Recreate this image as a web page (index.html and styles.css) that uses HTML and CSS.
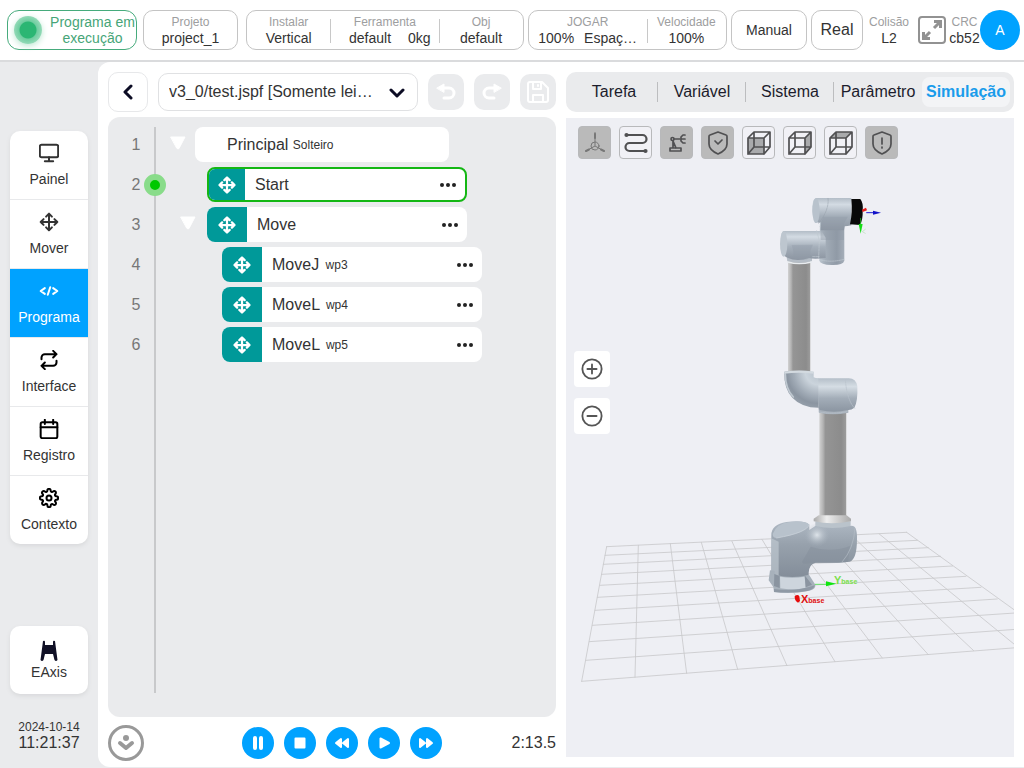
FILE: index.html
```html
<!DOCTYPE html>
<html lang="pt">
<head>
    <meta charset="UTF-8">
    <title>Programa</title>
    <link rel="stylesheet" href="styles.css">
</head>
<body>
    <svg class="defs" aria-hidden="true">
        <symbol id="move" viewBox="0 0 24 24"><path d="M12 2v20M2 12h20M8.500 5.500L12 2l3.500 3.500M8.500 18.500L12 22l3.500-3.500M5.500 8.500L2 12l3.500 3.500M18.500 8.500L22 12l-3.500 3.500" /></symbol>
        <symbol id="dots" viewBox="0 0 18 6"><circle cx="3" cy="3" r="2" /><circle cx="9" cy="3" r="2" /><circle cx="15" cy="3" r="2" /></symbol>
        <symbol id="caret" viewBox="0 0 16 14"><path d="M1 1h14L9 12.500q-1 1-2 0z" /></symbol>
        <symbol id="cube" viewBox="0 0 24 24"><path d="M1 7h16v16H1zM1 7l6-6h16l-6 6M23 1v15l-6 7M7 1v15h16M7 16l-6 7" /></symbol>
    </svg>

    <header class="topbar">
        <div class="box status"><span class="status-dot"></span><span>Programa em execução</span></div>
        <div class="box project"><div class="cell"><small>Projeto</small><span>project_1</span></div></div>
        <div class="box setup">
            <div class="cell"><small>Instalar</small><span>Vertical</span></div>
            <div class="cell tool"><small>Ferramenta</small><span class="pair"><span>default</span><span>0kg</span></span></div>
            <div class="cell"><small>Obj</small><span>default</span></div>
        </div>
        <div class="box play">
            <div class="cell jog"><small>JOGAR</small><span class="pair"><span>100%</span><span>Espaç…</span></span></div>
            <div class="cell"><small>Velocidade</small><span>100%</span></div>
        </div>
        <button class="box manual">Manual</button>
        <button class="box real">Real</button>
        <div class="tail">
            <div class="cell collision"><small>Colisão</small><span>L2</span></div>
            <button class="expand" aria-label="Expandir">
                <svg viewBox="0 0 28 28" width="28" height="28"><rect x="1" y="1" width="26" height="26" rx="3" /><path d="M16 12l6-6M16 5.500h6.500V12M12 16l-6 6M5.500 16v6.500H12" /></svg>
            </button>
            <div class="cell crc"><small>CRC</small><span>cb52</span></div>
            <button class="avatar">A</button>
        </div>
    </header>

    <main class="layout">
        <aside class="sidebar">
            <nav class="card">
                <a href="#" class="item"><svg viewBox="0 0 24 24"><rect x="1" y="2" width="22" height="15" rx="2" /><path d="M7 22h10M12 17v5" /></svg>Painel</a>
                <a href="#" class="item"><svg><use href="#move" /></svg>Mover</a>
                <a href="#" class="item active"><svg viewBox="0 0 24 24"><path d="M7 8.500L2 12l5 3.500M17 8.500l5 3.500-5 3.500M13.500 7.500l-3 9" /></svg>Programa</a>
                <a href="#" class="item"><svg class="dark" viewBox="0 0 24 24"><path d="M17 1l4 4-4 4M3 11V9a4 4 0 0 1 4-4h14M7 23l-4-4 4-4M21 13v2a4 4 0 0 1-4 4H3" /></svg>Interface</a>
                <a href="#" class="item"><svg class="dark" viewBox="0 0 24 24"><rect x="2" y="4" width="20" height="19" rx="2" /><path d="M17 1v5M7 1v5M2 10h20" /></svg>Registro</a>
                <a href="#" class="item"><svg class="dark" viewBox="0 0 24 24"><circle cx="12" cy="12" r="3" /><path d="M19.400 15a1.650 1.650 0 0 0 .33 1.820l.06.06a2 2 0 1 1-2.830 2.830l-.06-.06a1.650 1.650 0 0 0-2.820 1.170V21a2 2 0 0 1-4 0v-.09a1.650 1.650 0 0 0-2.900-1.260l-.06.06a2 2 0 1 1-2.830-2.830l.06-.06A1.650 1.650 0 0 0 3.090 14H3a2 2 0 0 1 0-4h.09a1.650 1.650 0 0 0 1.260-2.820l-.06-.06a2 2 0 1 1 2.830-2.830l.06.06A1.650 1.650 0 0 0 10 3.090V3a2 2 0 0 1 4 0v.09a1.650 1.650 0 0 0 2.820 1.260l.06-.06a2 2 0 1 1 2.830 2.830l-.06.06A1.650 1.650 0 0 0 20.910 10H21a2 2 0 0 1 0 4h-.09a1.650 1.650 0 0 0-1.510 1z" /></svg>Contexto</a>
            </nav>
            <a href="#" class="card eaxis">
                <svg viewBox="0 0 18 22" width="18" height="22"><path d="M3 1q2-1 2 1v3h8V2q0-2 2-1l2.500 19q-1.500 2-3 0L13 14H5L3.500 20q-1.500 2-3 0z" /></svg>
                EAxis
            </a>
            <div class="clock"><span class="date">2024-10-14</span><span>11:21:37</span></div>
        </aside>

        <div class="workspace">
            <section class="program">
                <div class="filebar">
                    <button class="back" aria-label="Voltar"><svg viewBox="0 0 12 16" width="12" height="16"><path d="M9 2L3 8l6 6" /></svg></button>
                    <div class="file">
                        <select aria-label="Arquivo"><option>v3_0/test.jspf [Somente lei…</option></select>
                        <svg viewBox="0 0 16 12" width="16" height="12"><path d="M2 3l6 6 6-6" /></svg>
                    </div>
                    <button class="tool-btn" aria-label="Desfazer"><svg viewBox="0 0 22 22"><path class="solid" d="M2 7l7-4v8z" /><path d="M8 7h6a4.500 4.500 0 0 1 0 10H9" /></svg></button>
                    <button class="tool-btn" aria-label="Refazer"><svg viewBox="0 0 22 22"><path class="solid" d="M20 7l-7-4v8z" /><path d="M14 7H8a4.500 4.500 0 0 0 0 10h5" /></svg></button>
                    <button class="tool-btn save" aria-label="Salvar"><svg viewBox="0 0 22 22"><path d="M3 1h12l6 6v12a2 2 0 0 1-2 2H3a2 2 0 0 1-2-2V3a2 2 0 0 1 2-2zM6 1v7h8V1M6 21v-7h10v7M11 4v1" /></svg></button>
                </div>

                <div class="tree">
                    <div class="row level0">
                        <span class="num">1</span>
                        <span class="indent"><svg class="caret"><use href="#caret" /></svg></span>
                        <div class="node root">Principal <small>Solteiro</small></div>
                    </div>
                    <div class="row level1 current">
                        <span class="num">2</span><span class="marker"></span>
                        <span class="indent"></span>
                        <div class="node"><span class="node-icon"><svg><use href="#move" /></svg></span>Start<button class="more" aria-label="Mais"><svg><use href="#dots" /></svg></button></div>
                    </div>
                    <div class="row level1">
                        <span class="num">3</span>
                        <span class="indent"><svg class="caret"><use href="#caret" /></svg></span>
                        <div class="node"><span class="node-icon"><svg><use href="#move" /></svg></span>Move<button class="more" aria-label="Mais"><svg><use href="#dots" /></svg></button></div>
                    </div>
                    <div class="row level2">
                        <span class="num">4</span>
                        <span class="indent"></span>
                        <div class="node"><span class="node-icon"><svg><use href="#move" /></svg></span>MoveJ <small>wp3</small><button class="more" aria-label="Mais"><svg><use href="#dots" /></svg></button></div>
                    </div>
                    <div class="row level2">
                        <span class="num">5</span>
                        <span class="indent"></span>
                        <div class="node"><span class="node-icon"><svg><use href="#move" /></svg></span>MoveL <small>wp4</small><button class="more" aria-label="Mais"><svg><use href="#dots" /></svg></button></div>
                    </div>
                    <div class="row level2">
                        <span class="num">6</span>
                        <span class="indent"></span>
                        <div class="node"><span class="node-icon"><svg><use href="#move" /></svg></span>MoveL <small>wp5</small><button class="more" aria-label="Mais"><svg><use href="#dots" /></svg></button></div>
                    </div>
                </div>

                <div class="controls">
                    <button class="locate" aria-label="Localizar"><svg viewBox="0 0 36 36" width="36" height="36"><circle class="ring" cx="18" cy="18" r="16.500" /><circle cx="18" cy="13" r="3" /><path d="M12 18l6 5 6-5" /></svg></button>
                    <div class="players">
                        <button aria-label="Pausar"><svg viewBox="0 0 32 32"><path d="M13 11v10M19 11v10" stroke-width="4" /></svg></button>
                        <button aria-label="Parar"><svg viewBox="0 0 32 32"><rect x="11.500" y="11.500" width="9" height="9" stroke-width="2" /></svg></button>
                        <button aria-label="Retroceder"><svg viewBox="0 0 32 32"><path d="M15 12v8l-5-4zM22 12v8l-5-4z" stroke-width="2" /></svg></button>
                        <button aria-label="Executar"><svg viewBox="0 0 32 32"><path d="M12.500 11.500v9l8.500-4.500z" stroke-width="2" /></svg></button>
                        <button aria-label="Avançar"><svg viewBox="0 0 32 32"><path d="M10 12v8l5-4zM17 12v8l5-4z" stroke-width="2" /></svg></button>
                    </div>
                    <span class="elapsed">2:13.5</span>
                </div>
            </section>

            <section class="preview">
                <nav class="tabs">
                    <a href="#">Tarefa</a>
                    <a href="#">Variável</a>
                    <a href="#">Sistema</a>
                    <a href="#">Parâmetro</a>
                    <a href="#" class="active">Simulação</a>
                </nav>
                <div class="view">
                    <svg class="scene" viewBox="566 118 448 639" preserveAspectRatio="xMidYMid slice">
                        <defs>
                            <linearGradient id="tube" x1="0" x2="1" y1="0" y2="0"><stop offset="0" stop-color="#d2d2d2" /><stop offset=".14" stop-color="#b2b2b2" /><stop offset=".22" stop-color="#959595" /><stop offset=".8" stop-color="#8c8c8c" /><stop offset=".96" stop-color="#9a9a9a" /><stop offset="1" stop-color="#ddd" /></linearGradient>
                            <linearGradient id="pipe" x1="0" x2="0" y1="0" y2="1"><stop offset="0" stop-color="#b3bdc7" /><stop offset=".2" stop-color="#d3dbe3" /><stop offset=".55" stop-color="#a5afba" /><stop offset="1" stop-color="#8c95a1" /></linearGradient>
                            <linearGradient id="post" x1="0" x2="1" y1="0" y2="0"><stop offset="0" stop-color="#bcc6cf" /><stop offset=".25" stop-color="#a2acb7" /><stop offset=".7" stop-color="#909aa6" /><stop offset="1" stop-color="#a5aeb9" /></linearGradient>
                            <radialGradient id="elbow" gradientUnits="userSpaceOnUse" cx="205" cy="-55" r="112"><stop offset="0" stop-color="#b5bfc9" /><stop offset=".35" stop-color="#cbd4dc" /><stop offset=".65" stop-color="#a3adb8" /><stop offset=".85" stop-color="#8b95a1" /><stop offset="1" stop-color="#959faa" /></radialGradient>
                            <linearGradient id="forearm" x1="0" x2="0" y1="0" y2="1"><stop offset="0" stop-color="#b5bfc9" /><stop offset=".25" stop-color="#d5dde4" /><stop offset=".6" stop-color="#a3adb8" /><stop offset="1" stop-color="#8b95a1" /></linearGradient>
                            <linearGradient id="body" x1="0" x2="0" y1="0" y2="1"><stop offset="0" stop-color="#afb9c4" /><stop offset=".4" stop-color="#97a1ac" /><stop offset="1" stop-color="#828c98" /></linearGradient>
                            <linearGradient id="collar" x1="0" x2="1" y1="0" y2="0"><stop offset="0" stop-color="#aaa" /><stop offset=".35" stop-color="#eee" /><stop offset="1" stop-color="#aaa" /></linearGradient>
                            <radialGradient id="shine"><stop offset="0" stop-color="#e5ebf0" stop-opacity=".9" /><stop offset="1" stop-color="#a8b2bd" stop-opacity="0" /></radialGradient>
                        </defs>
                        <g class="floor" transform="translate(560 500) scale(.3333)">
                            <path d="M140 140L1040 97M135 166L1072 121M130 193L1105 143M125 223L1142 169M120 256L1178 198M112 292L1218 229M105 331L1263 262M97 376L1312 297M88 425L1380 338M78 481L1410 385M65 544L1500 433" />
                            <path d="M140 140L65 544M235 136L225 532M331 131L380 520M424 127L533 508M516 124L681 497M606 118L825 485M695 114L967 474M785 110L1105 464M873 105L1241 452M958 102L1374 442M1040 97L1380 342" />
                        </g>
                        <!-- upper arm and wrist -->
                        <g transform="translate(750 180) scale(.3333)">
                            <rect x="114" y="240" width="68" height="340" fill="url(#tube)" />
                            <path d="M110 232h76v12q-36 10-74 0z" fill="#b5bdc6" />
                            <path d="M113 246q34 10 72 0" fill="none" stroke="#e9edf0" stroke-width="4" />
                            <path d="M210 118h73v124q-4 14-38 13-34-1-37-13z" fill="url(#post)" />
                            <path d="M100 153h115l12 20v61q-36 5-50 0-36 12-65-1-12-4-14-14-10-60 2-66z" fill="url(#pipe)" />
                            <path d="M125 195q8 22 4 40 30 10 52-1-4-20 8-40z" fill="#929ca8" opacity=".4" />
                            <ellipse cx="101" cy="192" rx="11" ry="38" fill="#bdc6cf" />
                            <path d="M200 152l8 30-2 52M188 230h22M210 140h74M212 240q34 8 70-2" fill="none" stroke="#bfc8d0" stroke-width="2" stroke-dasharray="8 3" />
                            <path d="M198 54h106v82q-12 3-20 3l-2 12h-70l1-24q-18 6-24-22-6-45 9-51z" fill="url(#pipe)" />
                            <path d="M220 110q-10 18-8 70h70V130l12-20z" fill="#8f99a6" opacity=".4" />
                            <ellipse cx="198" cy="92" rx="11" ry="37" fill="#b8c2cc" />
                            <path d="M234 55q4 34-28 75" fill="none" stroke="#939da8" stroke-width="1.500" stroke-dasharray="7 3" />
                            <path d="M304 57h27q10 12 7 37 1 25-8 41l-30-2q8-35 4-76z" fill="#080808" />
                            <path d="M350 98h24" stroke="#1e1ed2" stroke-width="3" />
                            <path d="M369 92l24 6-24 6z" fill="#1212c8" />
                            <path d="M336 89l12-6 3 8-13 5z" fill="#e81c1c" />
                            <path d="M332 115v18" stroke="#25e525" stroke-width="2" />
                            <path d="M326 132h12l-6 29z" fill="#16dd16" />
                            <path d="M346 148l-9 7 9 5" fill="none" stroke="#b5e0b5" stroke-width="2" />
                        </g>
                        <!-- lower arm, shoulder and base -->
                        <g transform="translate(750 390) scale(.3333)">
                            <rect x="208" y="60" width="82" height="325" fill="url(#tube)" />
                            <path d="M205 50h90v18q-46 10-88 0z" fill="#a7b0ba" />
                            <path d="M203-35h90q25-2 29 24 2 46-9 64-9 8-20 7-40 10-84 0l-4-9z" fill="url(#forearm)" />
                            <path d="M103-55q44-6 88 0v17q6 3 14 3v88q-50 0-78-30-26-28-24-78z" fill="url(#elbow)" />
                            <path d="M106-48q0 44 24 69" fill="none" stroke="#c0c9d1" stroke-width="5" />
                            <path d="M103-55q44-7 88 0v6q-44-5-88 0z" fill="#d3dae0" />
                            <path d="M286-30q5 60 28 85M207 66q44 8 87-2" fill="none" stroke="#b9c2cb" stroke-width="2" stroke-dasharray="8 3" />
                            <path d="M64 435q0-31 45-39 55-7 69 9v15l18-12h105q21-5 20 38 0 62-22 69l-32 3h-70q-20 5-21 30v15q-58 12-112 0z" fill="url(#body)" />
                            <path d="M64 445l22 10v107H64z" fill="#c2cbd3" opacity=".65" />
                            <path d="M68 432q12-32 52-36 48-6 58 8-12 26-98 40-12 0-12-12z" fill="#b8c2cc" />
                            <path d="M80 444q92-16 98-40" fill="none" stroke="#cdd5dc" stroke-width="2" />
                            <ellipse cx="201" cy="435" rx="38" ry="36" fill="url(#shine)" />
                            <path d="M182 470q58 20 118-2l-6 48q-60 7-110 2-24 8-28-2z" fill="#818b98" opacity=".4" />
                            <path d="M315 415q-4 62-38 100" fill="none" stroke="#b3bcc6" stroke-width="2" />
                            <path d="M196 394h106v14q-54 12-106 0z" fill="#bac3cb" />
                            <path d="M206 376h84l13 10v8q-58 12-112 0v-8z" fill="url(#collar)" />
                            <path d="M75 554q54 14 102 0l19 30q2 13-18 18-50 11-106 4l-2-15-14-20 4-30 14 2z" fill="#a7b1bb" />
                            <path d="M90 560q36 6 74 0l3 33q-34 8-76 2z" fill="#cdd5dd" />
                            <path d="M73 552l16 6v36l-17-6zM164 556l22 28-19 8z" fill="#8a94a0" />
                            <path d="M72 597q66 10 122-11-2 13-22 17-50 8-100 3z" fill="#8f99a5" />
                            <path d="M196 583h36" stroke="#27e527" stroke-width="2" />
                            <path d="M228 574l31 7-31 8z" fill="#10e610" />
                            <path d="M134 619q9-8 14 0l2 14-6 5q-11-6-10-19z" fill="#e60c0c" />
                        </g>
                        <text class="axis red" x="801" y="603">X<tspan class="sub">base</tspan></text>
                        <text class="axis green" x="834" y="584">Y<tspan class="sub">base</tspan></text>
                    </svg>

                    <div class="view-tools">
                        <button class="on" aria-label="Eixos"><svg class="thin" viewBox="0 0 24 24"><path d="M12 3v11M12 15l-9 5M12 15l9 5M12 1.500v5" /><circle cx="12" cy="15" r="4" /><path d="M12 3v4M3 20l3-1.500M21 20l-3-1.500" stroke-width="2" /></svg></button>
                        <button class="path" aria-label="Trajetória"><svg viewBox="0 0 24 24"><path d="M3 4h15.500a4 4 0 0 1 0 8h-13a4 4 0 0 0 0 8H21" /><circle cx="2.500" cy="4" r="1" /><circle cx="21.500" cy="20" r="1" /></svg></button>
                        <button class="on" aria-label="Robô"><svg viewBox="0 0 24 24"><path d="M5 17h11v3H5zM8 17V10M11 17L8 10M9 8h6" /><circle cx="7.500" cy="8" r="1.500" /><path d="M20 4h-2l-2 2v4l2 2h2M16 8h4" /></svg></button>
                        <button class="on" aria-label="Segurança"><svg viewBox="0 0 24 24"><path d="M12 1l8 3q1 0 1 2v7q0 6-9 10-9-4-9-10V6q0-2 1-2zM9 10l3 3 4-4" /></svg></button>
                        <button aria-label="Vista frontal"><svg viewBox="0 0 24 24"><path class="face" d="M1 7h16v16H1z" /><use href="#cube" /></svg></button>
                        <button aria-label="Vista lateral"><svg viewBox="0 0 24 24"><path class="face" d="M17 7l6-6v15l-6 7z" /><use href="#cube" /></svg></button>
                        <button aria-label="Vista superior"><svg viewBox="0 0 24 24"><path class="face" d="M1 7l6-6h16l-6 6z" /><use href="#cube" /></svg></button>
                        <button class="on" aria-label="Alerta"><svg viewBox="0 0 24 24"><path d="M12 1l8 3q1 0 1 2v7q0 6-9 10-9-4-9-10V6q0-2 1-2zM12 7v6M12 16v1" /></svg></button>
                    </div>
                    <div class="zoom">
                        <button aria-label="Ampliar"><svg viewBox="0 0 24 24"><circle cx="12" cy="12" r="10.500" /><path d="M12 7v10M7 12h10" /></svg></button>
                        <button aria-label="Reduzir"><svg viewBox="0 0 24 24"><circle cx="12" cy="12" r="10.500" /><path d="M7 12h10" /></svg></button>
                    </div>
                </div>
            </section>
        </div>
    </main>
</body>
</html>
```
FILE: styles.css
```css
* { box-sizing: border-box; }
body { margin: 0; min-height: 100vh; display: flex; flex-direction: column; background: #eaebed; color: #333; font: 14px/16px "Liberation Sans", Arial, sans-serif; }
button { padding: 0; border: none; background: none; font: inherit; color: inherit; cursor: pointer; }
a { color: inherit; text-decoration: none; }
svg { display: block; fill: none; stroke: currentColor; stroke-linecap: round; stroke-linejoin: round; }
.defs { position: absolute; width: 0; height: 0; }

/* top bar */
.topbar { display: flex; gap: 4px; padding: 10px 4px 10px 7px; background: #fff; border-bottom: 2px solid #dadbdd; }
.box { display: flex; align-items: center; justify-content: center; height: 40px; border: 1px solid #c4c4c4; border-radius: 10px; background: #fff; }
.status { width: 130px; padding-left: 6px; gap: 7px; border-color: #46ab7c; border-radius: 12px; color: #46a578; text-align: center; }
.status span:last-child { flex: 1; }
.status-dot { flex: none; width: 28px; height: 28px; border-radius: 50%; background: radial-gradient(#2bb673 0 8px, #6fcda0 9px, #93dab7 14px); box-shadow: 0 2px 6px #bfe8d3; }
.project { width: 95px; margin: 0 4px 0 2px; }
.setup { flex: 278 1 0; }
.play { flex: 199 1 0; }
.manual { width: 76px; }
.real { width: 52px; font-size: 16px; }
.cell { display: flex; flex: 1; flex-direction: column; align-items: center; white-space: nowrap; }
.cell small { font-size: 12px; line-height: 15px; color: #9d9ea0; }
.box .cell + .cell { background: linear-gradient(#c8c8c8, #c8c8c8) left 4px / 1px 24px no-repeat; }
.setup .tool { flex: 0 0 109px; }
.play .jog { flex: 0 0 118px; }
.pair { display: flex; gap: 17px; }
.tool .pair { margin-left: 10px; }
.jog .pair { gap: 10px; }
.tail { display: flex; align-items: center; }
.tail .cell { flex: none; }
.collision { width: 44px; }
.expand { width: 38px; padding-left: 7px; color: #929292; }
.expand svg { stroke-width: 2; stroke-linecap: butt; stroke-linejoin: miter; }
.expand path { stroke-width: 3; }
.crc { width: 31px; }
.avatar { width: 40px; height: 40px; border-radius: 50%; background: #00a2ff; color: #fff; }

.layout { display: flex; flex: 1; padding-bottom: 1px; }

/* sidebar */
.sidebar { display: flex; flex: 0 0 98px; flex-direction: column; padding: 69px 10px 16px; }
.card { border-radius: 10px; background: #fff; box-shadow: 0 2px 4px #d8d9db; overflow: hidden; }
.item { display: flex; flex-direction: column; align-items: center; gap: 6px; height: 69px; padding-top: 12px; line-height: 20px; border-bottom: 1px solid #e8e9eb; }
.item:last-child { height: 68px; border-bottom: none; }
.item svg { width: 20px; height: 20px; stroke-width: 2.4; }
.item .dark { color: #000; }
.item.active { background: #00a2ff; color: #fff; }
.eaxis { display: flex; flex-direction: column; align-items: center; height: 68px; margin-top: auto; padding-top: 14px; line-height: 20px; }
.eaxis svg { fill: #101026; stroke: none; }
.clock { display: flex; flex-direction: column; align-items: center; margin-top: 25px; font-size: 16px; }
.date { font-size: 12px; }

/* workspace */
.workspace { display: grid; grid-template-columns: 1fr 1fr; gap: 10px; flex: 1; padding: 10px 10px 6px; border-radius: 12px 0 0 12px; background: #fff; }
.program, .preview { display: flex; flex-direction: column; min-width: 0; }
.filebar { display: flex; align-items: center; gap: 10px; height: 40px; font-size: 16px; }
.back { display: flex; align-items: center; justify-content: center; width: 40px; height: 40px; border: 1px solid #e7e8ea; border-radius: 10px; color: #0c0c24; }
.back svg, .file svg { stroke-width: 3; }
.file { position: relative; flex: 1; min-width: 0; }
.file select { width: 100%; height: 38px; padding: 0 40px 0 10px; appearance: none; border: 1px solid #e0e1e3; border-radius: 10px; background: #fff; font: inherit; color: #333; }
.file svg { position: absolute; top: 14px; right: 13px; color: #0c0c24; pointer-events: none; }
.tool-btn { display: flex; align-items: center; justify-content: center; width: 36px; height: 36px; border-radius: 10px; background: #eaebed; color: #fff; }
.tool-btn svg { width: 22px; height: 22px; stroke-width: 3; }
.tool-btn.save svg { stroke-width: 2; }
.tool-btn .solid { fill: #fff; stroke-width: 1; }

/* program tree */
.tree { display: flex; flex: 1; flex-direction: column; gap: 5px; margin-top: 5px; padding: 10px 0 24px; border-radius: 12px; background: linear-gradient(#c8c9cb, #c8c9cb) 46px 10px / 2px calc(100% - 34px) no-repeat #eaebed; font-size: 16px; }
.row { position: relative; display: flex; align-items: center; height: 35px; }
.num { width: 56px; text-align: center; color: #777; }
.marker { position: absolute; left: 36px; width: 22px; height: 22px; border: 6px solid #89dc8a; border-radius: 50%; background: #00c800; }
.indent { display: flex; justify-content: flex-end; padding-right: 9px; }
.caret { width: 16px; height: 14px; margin-bottom: 3px; fill: #fff; stroke: #fff; }
.level0 .indent { width: 31px; }
.level1 .indent { width: 43px; padding-right: 11px; }
.level2 .indent { width: 58px; }
.node { display: flex; align-items: center; width: 260px; height: 35px; padding-right: 8px; border-radius: 8px; background: #fff; overflow: hidden; white-space: pre; }
.node small { font-size: 12px; }
.node.root { width: 254px; padding-left: 32px; }
.node-icon { display: flex; align-items: center; justify-content: center; width: 40px; height: 100%; margin-right: 10px; background: #009999; color: #fff; }
.node-icon svg { width: 18px; height: 18px; stroke-width: 3; }
.level2 small { margin-left: 2px; }
.current .node { border: 2px solid #14b714; }
.current .node-icon { width: 36px; }
.more { margin-left: auto; }
.more svg { width: 18px; height: 6px; fill: #222; stroke: none; }

/* playback */
.controls { display: grid; grid-template-columns: 1fr auto 1fr; align-items: center; margin-top: 8px; }
.locate { justify-self: start; color: #999; }
.locate svg { fill: #999; stroke: none; }
.locate path { fill: none; stroke: #999; stroke-width: 4; }
.locate .ring { fill: none; stroke: #999; stroke-width: 3; }
.players { display: flex; gap: 10px; margin-left: 20px; }
.players button { width: 32px; height: 32px; border-radius: 50%; background: #00a2ff; color: #fff; }
.players svg { fill: #fff; }
.elapsed { justify-self: end; font-size: 16px; }

/* tabs */
.tabs { display: flex; height: 40px; padding: 5px 4px; border-radius: 10px; background: #eaebed; font-size: 16px; color: #1c1c2c; }
.tabs a { display: flex; flex: 1 1 0; min-width: 0; align-items: center; justify-content: center; background: linear-gradient(#bcbdbf, #bcbdbf) right 5px / 1px 20px no-repeat; }
.tabs a:nth-child(4) { background: none; }
.tabs .active { border-radius: 8px; background: #f3f4f6; color: #1a9ceb; font-weight: bold; }

/* simulation */
.view { position: relative; flex: 1; margin: 6px 0 4px; background: #eeeff4; }
.scene { position: absolute; width: 100%; height: 100%; stroke: none; }
.floor { stroke: #c9c9cb; stroke-width: 2.5; }
.axis { font-size: 11px; font-weight: bold; }
.axis .sub { font-size: 7px; }
.red { fill: #e00f0f; }
.green { fill: #7be04a; }
.view-tools { position: relative; display: flex; gap: 8px; padding: 8px 12px; }
.view-tools button { display: flex; align-items: center; justify-content: center; width: 33px; height: 33px; border: 1px solid #b8b9bb; border-radius: 4px; background: #f1f1f6; color: #505052; }
.view-tools .on { background: #bababa; }
.view-tools svg { width: 24px; height: 24px; stroke-width: 1.7; }
.view-tools .path svg { stroke-width: 2.2; }
.view-tools .thin { stroke-width: 1; color: #777; }
.view-tools .face { fill: #a9aaac; stroke: none; }
.zoom { position: absolute; top: 233px; left: 8px; display: flex; flex-direction: column; gap: 11px; }
.zoom button { display: flex; align-items: center; justify-content: center; width: 36px; height: 36px; border-radius: 4px; background: #fff; color: #555; }
.zoom svg { width: 22px; height: 22px; stroke-width: 2; }
```
